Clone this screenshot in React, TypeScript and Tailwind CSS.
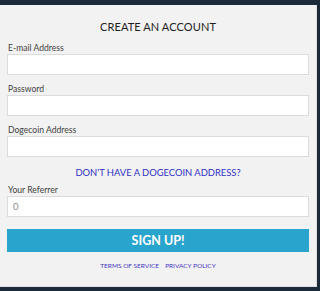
import React from "react";

const Field = ({ label, value, top }: { label: string; value?: string; top: string }) => (
  <div className={top}>
    <label className="block text-[8.6px] leading-[10px] text-[#3f3f3f] pl-[1px]">{label}</label>
    <input
      readOnly
      value={value ?? ""}
      className="mt-[1px] block w-full h-[21px] bg-white border border-[#dcdcdc] px-[5px] text-[9.5px] text-[#8a8a8a] outline-none"
    />
  </div>
);

export default function App() {
  return (
    <div
      className="w-[320px] h-[291px] bg-[#1c2b3a] pt-[5px] pr-[3px] pb-[4px] overflow-hidden"
      style={{ fontFamily: "Lato, 'Open Sans', sans-serif" }}
    >
      <div className="h-full bg-[#f2f2f2] border-r border-b border-[#e0e0e0] px-[7px] flex flex-col">
        {/* Title */}
        <h1 className="mt-[15px] text-center text-[11px] leading-[14px] text-[#1e1e1e] tracking-[0.1px]">
          CREATE AN ACCOUNT
        </h1>

        <Field label="E-mail Address" top="mt-[9px]" />
        <Field label="Password" top="mt-[9px]" />
        <Field label="Dogecoin Address" top="mt-[9px]" />

        <a className="mt-[10px] text-center text-[9.4px] leading-[12px] text-[#3030c8]">
          DON'T HAVE A DOGECOIN ADDRESS?
        </a>

        <Field label="Your Referrer" value="0" top="mt-[6px]" />

        {/* Submit */}
        <button className="mt-[12px] h-[23px] w-full bg-[#29a4cc] text-white font-bold text-[12.5px] leading-[23px]">
          SIGN UP!
        </button>

        <div className="mt-[10px] flex justify-center gap-[6px] text-[6.5px] leading-[8px] text-[#4535c6]">
          <span>TERMS OF SERVICE</span>
          <span>PRIVACY POLICY</span>
        </div>
      </div>
    </div>
  );
}
